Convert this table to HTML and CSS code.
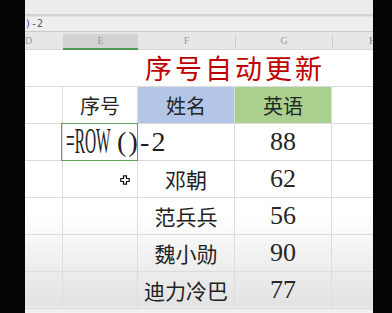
FILE: index.html
```html
<!DOCTYPE html>
<html>
<head>
<meta charset="utf-8">
<link rel="stylesheet" href="styles.css">
</head>
<body>
<div class="screen">
  <div class="bezel bezel-left"></div>
  <div class="app">
    <div class="toolbar"></div>
    <div class="formula">)-2</div>
    <div class="colheads">
      <div class="ch">D</div>
      <div class="ch sel">E</div>
      <div class="ch">F</div>
      <div class="ch sep">G</div>
      <div class="ch sep last">H</div>
    </div>
    <div class="sheet">
      <div class="title-row"><span class="title">序号自动更新</span></div>
      <div class="row">
        <div class="c"></div>
        <div class="c hd">序号</div>
        <div class="c hd blue">姓名</div>
        <div class="c hd green">英语</div>
        <div class="c"></div>
      </div>
      <div class="row">
        <div class="c"></div>
        <div class="c active"><span class="fa"><span class="fa-in">=ROW</span></span><span class="fb">()-2</span><span class="caret"></span></div>
        <div class="c"></div>
        <div class="c num">88</div>
        <div class="c"></div>
      </div>
      <div class="row">
        <div class="c"></div>
        <div class="c cur"><svg class="plus" width="10" height="10" viewBox="0 0 10 10"><path d="M3.5 0.8h3v2.7h2.7v3h-2.7v2.7h-3v-2.7h-2.7v-3h2.7z" fill="#fff" stroke="#111" stroke-width="1.2"/></svg></div>
        <div class="c name">邓朝</div>
        <div class="c num">62</div>
        <div class="c"></div>
      </div>
      <div class="row">
        <div class="c"></div>
        <div class="c"></div>
        <div class="c name">范兵兵</div>
        <div class="c num">56</div>
        <div class="c"></div>
      </div>
      <div class="row">
        <div class="c"></div>
        <div class="c"></div>
        <div class="c name">魏小勋</div>
        <div class="c num">90</div>
        <div class="c"></div>
      </div>
      <div class="row">
        <div class="c"></div>
        <div class="c"></div>
        <div class="c name">迪力冷巴</div>
        <div class="c num">77</div>
        <div class="c"></div>
      </div>
    </div>
  </div>
  <div class="bezel bezel-right"></div>
</div>
</body>
</html>
```

FILE: styles.css
```css
* { box-sizing: border-box; }
html, body { margin: 0; padding: 0; background: #000; }
.screen {
  display: flex;
  width: 392px;
  height: 313px;
  overflow: hidden;
}
.bezel { background: #050505; flex: none; }
.bezel-left { width: 25px; }
.bezel-right { width: 19px; }
.app {
  width: 348px;
  display: flex;
  flex-direction: column;
  background: #fff;
}
.toolbar {
  height: 16px;
  background: #ececec;
  border-bottom: 2px solid #d2d2d2;
  flex: none;
}
.formula {
  height: 16px;
  background: #eeeeee;
  border-top: 1px solid #e2e2e2;
  border-bottom: 1px solid #c9c9c9;
  font-family: "DejaVu Sans Mono", monospace;
  font-size: 10px;
  line-height: 14px;
  color: #555;
  flex: none;
}
.colheads {
  display: grid;
  grid-template-columns: 38px 75px 97px 97px 41px;
  height: 18px;
  background: #e7e7e7;
  border-bottom: 1px solid #d6d6d6;
  flex: none;
}
.ch {
  font-family: "Liberation Serif", serif;
  font-size: 10px;
  color: #9a9a9a;
  text-align: center;
  line-height: 17px;
}
.ch:first-child { text-align: left; }
.ch.sel {
  background: #d3d3d3;
  border-bottom: 2px solid #4f9a55;
  margin-top: 2px;
  line-height: 14px;
}
.ch.sep { border-left: 1px solid #cfcfcf; margin: 3px 0 2px; line-height: 12px; }
.ch.last { text-align: left; padding-left: 36px; color: #888; }
.sheet {
  flex: 1;
  background: linear-gradient(to bottom, #fff 0, #fff 165px, #f1f1f1 205px, #e3e3e3 255px, #f4f4f4 263px);
}
.title-row {
  height: 37px;
  border-bottom: 1px solid #dcdcdc;
  padding-left: 120px;
}
.title {
  font-family: "Noto Sans CJK SC", sans-serif;
  font-size: 27px;
  line-height: 35px;
  letter-spacing: 3px;
  color: #c00000;
}
.row {
  display: grid;
  grid-template-columns: 38px 75px 97px 97px 41px;
  height: 37px;
}
.c {
  border-right: 1px solid #dcdcdc;
  border-bottom: 1px solid #dcdcdc;
  display: flex;
  align-items: center;
  justify-content: center;
  font-family: "Noto Sans CJK SC", sans-serif;
  font-size: 21px;
  color: #222;
  position: relative;
  white-space: nowrap;
}
.c:last-child { border-right: none; }
.hd { font-size: 20px; color: #262626; }
.blue { background: #b4c6e7; }
.green { background: #a9d08e; }
.name { font-size: 21px; }
.num {
  font-family: "Liberation Serif", serif;
  font-size: 26px;
  color: #262626;
}
.active {
  justify-content: flex-start;
  overflow: visible;
  z-index: 1;
  font-family: "Liberation Serif", serif;
  color: #1e1e1e;
}
.active::after {
  content: "";
  position: absolute;
  left: -2px;
  top: -1px;
  right: -1px;
  bottom: -1px;
  border: 1.5px solid #5da25d;
  pointer-events: none;
}
.fa {
  display: inline-block;
  width: 45px;
  margin-left: 3px;
  font-size: 35px;
  line-height: 36px;
}
.fa-in {
  display: inline-block;
  transform: scaleX(0.44);
  transform-origin: left center;
}
.fb {
  font-size: 28px;
  line-height: 36px;
  letter-spacing: 2.2px;
  margin-left: 6px;
}
.caret {
  display: inline-block;
  width: 1px;
  height: 34px;
  background: #222;
  margin-left: 5px;
}
.plus {
  position: absolute;
  left: 57px;
  top: 14px;
}
```
